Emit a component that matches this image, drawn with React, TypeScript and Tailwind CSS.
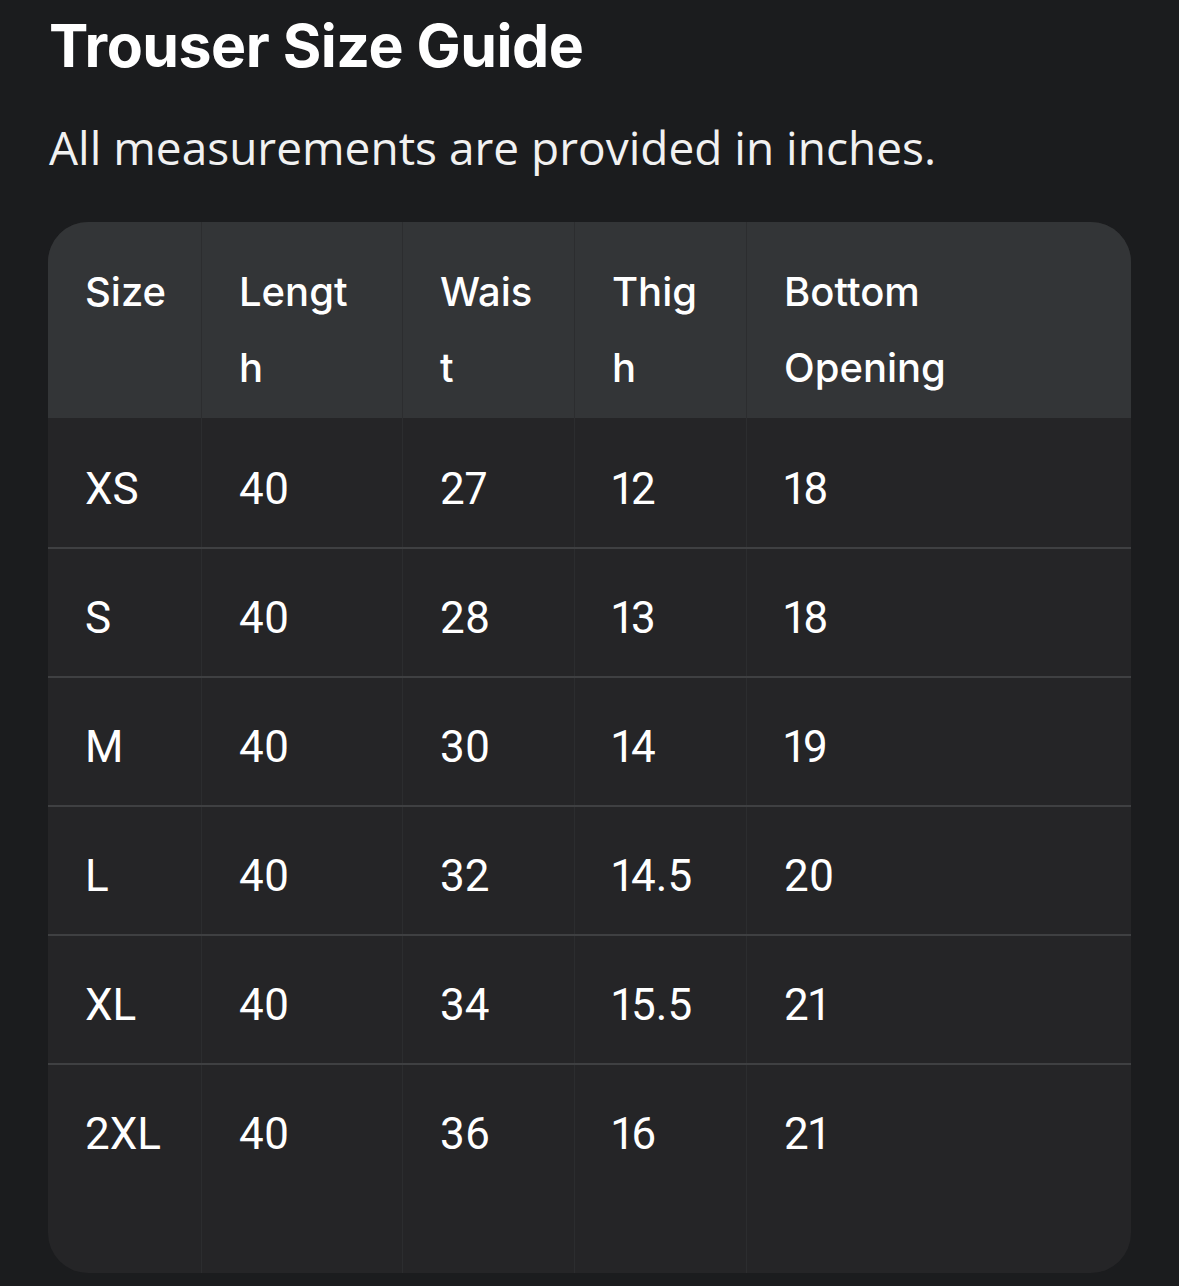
import React from "react";

const rows = [
  ["XS", "40", "27", "12", "18"],
  ["S", "40", "28", "13", "18"],
  ["M", "40", "30", "14", "19"],
  ["L", "40", "32", "14.5", "20"],
  ["XL", "40", "34", "15.5", "21"],
  ["2XL", "40", "36", "16", "21"],
];

const headers: React.ReactNode[] = [
  <>Size</>,
  <>Lengt<br />h</>,
  <>Wais<br />t</>,
  <>Thig<br />h</>,
  <>Bottom<br />Opening</>,
];

const cols = "grid grid-cols-[154px_201px_172px_172px_1fr]";

export default function App() {
  return (
    <div className="min-h-[1286px] w-[1179px] bg-[#1b1c1e] pl-[48px] pr-[48px] pt-[10px] text-white">
      <h1
        className="pl-[1px] text-[59px] font-bold leading-[72px] tracking-[-0.5px]"
        style={{ fontFamily: "Inter, 'Noto Sans', sans-serif" }}
      >
        Trouser Size Guide
      </h1>
      <p
        className="mt-[39px] pl-[1px] text-[46px] leading-[52px] text-[#f1f1f1]"
        style={{ fontFamily: "'Open Sans', Roboto, sans-serif" }}
      >
        All measurements are provided in inches.
      </p>
      <div className="mt-[49px] overflow-hidden rounded-[40px] bg-[#252527]">
        <div className={`${cols} bg-[#333537]`}>
          {headers.map((h, i) => (
            <div
              key={i}
              className={`h-[196px] pt-[32px] pl-[37px] ${
                i < 4 ? "border-r border-[#2c2d2f]" : ""
              } text-[40px] font-medium leading-[76px] text-white`}
              style={{ fontFamily: "Inter, 'Noto Sans', sans-serif" }}
            >
              {h}
            </div>
          ))}
        </div>
        {rows.map((r, ri) => (
          <div
            key={ri}
            className={`${cols} ${ri > 0 ? "border-t-2 border-[#3f4042]" : ""}`}
          >
            {r.map((c, ci) => (
              <div
                key={ci}
                className={`${
                  ri === rows.length - 1 ? "h-[208px]" : ri === 0 ? "h-[129px]" : "h-[127px]"
                } pl-[37px] ${ri === 0 ? "pt-[45px]" : "pt-[43px]"} ${
                  ci < 4 ? "border-r border-[#2c2d2f]" : ""
                } text-[44px] leading-[52px] text-white proportional-nums`}
                style={{ fontFamily: "Roboto, 'Liberation Sans', sans-serif" }}
              >
                {c}
              </div>
            ))}
          </div>
        ))}
      </div>
    </div>
  );
}
